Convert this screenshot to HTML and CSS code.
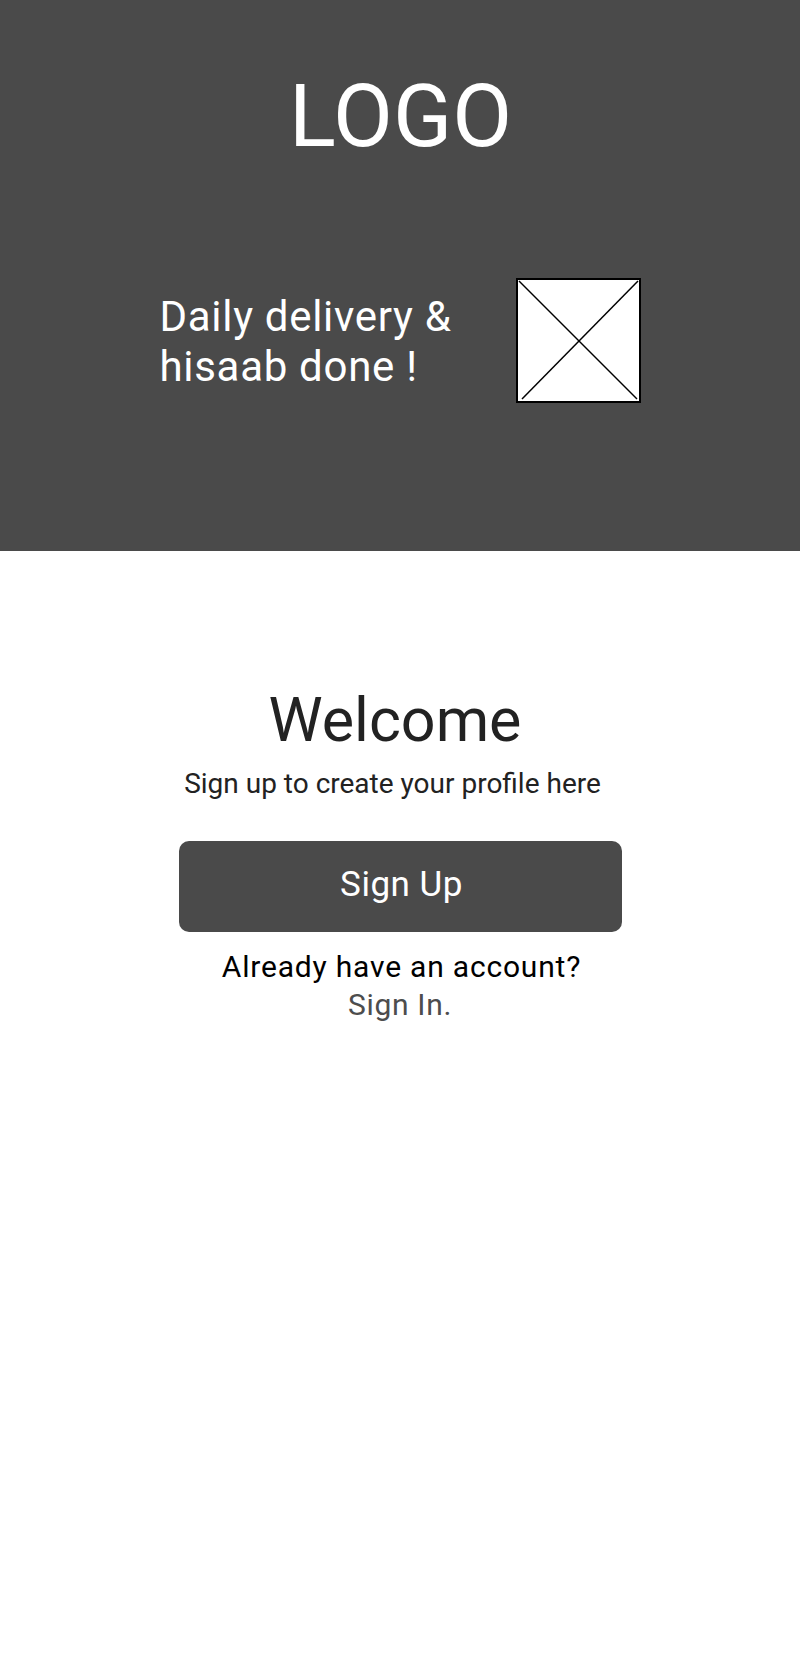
FILE: index.html
```html
<!DOCTYPE html>
<html lang="en">
<head>
  <meta charset="UTF-8" />
  <meta name="viewport" content="width=device-width, initial-scale=1.0" />
  <title>Welcome</title>
  <link rel="stylesheet" href="styles.css">
</head>
<body>
  <header class="hero">
    <h1 class="logo">LOGO</h1>
    <div class="hero-row">
      <p class="tagline">Daily delivery &amp;<br>hisaab done !</p>
      <div class="placeholder">
        <svg viewBox="0 0 121 121" width="121" height="121" preserveAspectRatio="none">
          <line x1="1" y1="1" x2="119" y2="119" />
          <line x1="120" y1="1" x2="4" y2="119" />
        </svg>
      </div>
    </div>
  </header>

  <main class="welcome">
    <h2>Welcome</h2>
    <p class="subtitle">Sign up to create your profile here</p>
    <button class="btn-signup">Sign Up</button>
    <p class="account">Already have an account?</p>
    <a class="signin" href="#">Sign In.</a>
  </main>
</body>
</html>
```

FILE: styles.css
```css
* { box-sizing: border-box; margin: 0; padding: 0; }
body {
  font-family: Roboto, 'Noto Sans', sans-serif;
  background: #ffffff;
  color: #222;
}

.hero {
  background: #4a4a4a;
  color: white;
  height: 551px;
  padding-top: 65px;
  display: flex;
  flex-direction: column;
  align-items: center;
}

.logo {
  font-size: 87px;
  font-weight: 400;
  line-height: normal;
  margin-left: 1px;
}

.hero-row {
  margin-top: 111px;
  display: flex;
  align-items: center;
  gap: 58px;
  margin-left: 0;
}

.tagline {
  font-size: 42px;
  line-height: 50px;
  letter-spacing: 0.7px;
  width: 298px;
  white-space: nowrap;
  margin-top: 3px;
}

.placeholder {
  width: 125px;
  height: 125px;
  background: white;
  border: 2px solid #000;
}

.placeholder svg {
  display: block;
  width: 121px;
  height: 121px;
}

.placeholder line {
  stroke: #000;
  stroke-width: 1.5;
}

.welcome {
  display: flex;
  flex-direction: column;
  align-items: center;
  padding-top: 133px;
}

.welcome h2 {
  font-size: 61px;
  font-weight: 400;
  line-height: normal;
  color: #222;
  margin-right: 10px;
}

.subtitle {
  font-size: 28px;
  line-height: normal;
  margin-top: 11px;
  margin-right: 15px;
}

.btn-signup {
  margin-top: 41px;
  width: 443px;
  height: 91px;
  border: none;
  border-radius: 10px;
  background: #4a4a4a;
  color: white;
  font-family: inherit;
  font-size: 35px;
  letter-spacing: 0.5px;
  padding-bottom: 4px;
  padding-left: 3px;
}

.account {
  margin-top: 17px;
  font-size: 30px;
  line-height: normal;
  letter-spacing: 0.8px;
  color: #000;
  margin-left: 3px;
}

.signin {
  margin-top: 3px;
  font-size: 30px;
  line-height: normal;
  letter-spacing: 0.7px;
  color: #4d4d4d;
  text-decoration: none;
}
```
